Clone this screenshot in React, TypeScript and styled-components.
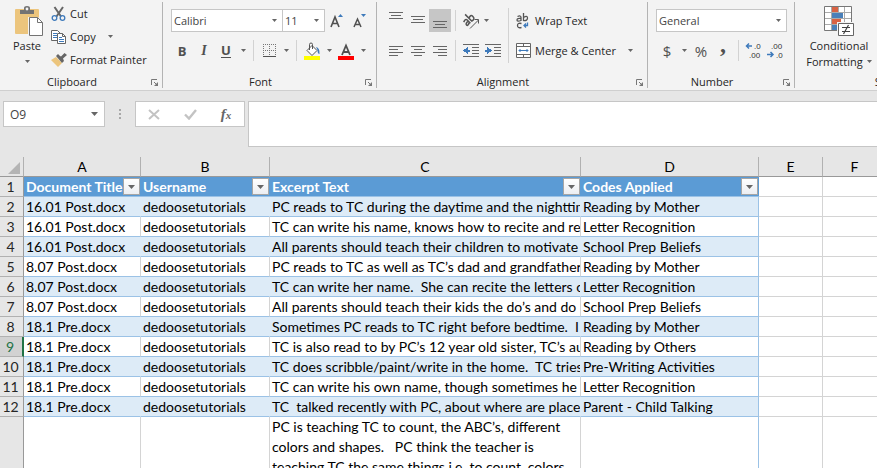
import React from "react";
import styled, { createGlobalStyle, css } from "styled-components";

const UI_FONT = '"Open Sans", "Noto Sans", sans-serif';
const CELL_FONT = 'Lato, "Open Sans", sans-serif';

const color = {
  ribbon: "#f3f3f3",
  chrome: "#e6e6e6",
  ink: "#262626",
  icon: "#666666",
  line: "#c6c6c6",
  grid: "#d4d4d4",
  headerLine: "#b1b1b1",
  blue: "#3e7abb",
  table: "#5b9bd5",
  tableLine: "#9bc2e6",
  band: "#ddebf7",
  green: "#217346",
};

const GlobalStyle = createGlobalStyle`
  *, *::before, *::after { box-sizing: border-box; }
  body { margin: 0; background: #fff; }
  button, input, select { font: inherit; color: inherit; }
`;

const Window = styled.div`
  display: flex;
  flex-direction: column;
  height: 100vh;
  overflow: hidden;
  font-family: ${UI_FONT};
  font-size: 11px;
  color: ${color.ink};
  background: ${color.chrome};
`;

/* ---------- ribbon ---------- */

const Ribbon = styled.header`
  display: flex;
  flex: none;
  overflow: hidden;
  padding: 2px 0;
  background: ${color.ribbon};
  border-bottom: 1px solid #cfcfcf;
`;

const Group = styled.section<{ $width: number }>`
  display: flex;
  flex-direction: column;
  flex: none;
  width: ${(p) => p.$width}px;
  border-right: 1px solid #b3b3b3;
`;

const GroupBody = styled.div`
  display: flex;
  height: 73px;
`;

const GroupFooter = styled.div`
  display: flex;
  align-items: center;
  height: 13px;
  padding-right: 4px;
`;

const GroupLabel = styled.h2`
  flex: 1;
  margin: 0;
  font-size: 11px;
  font-weight: 500;
  line-height: 15px;
  text-align: center;
`;

const Launcher = styled.button`
  display: flex;
  padding: 2px 0 0 7px;
  border: 0;
  background: none;
`;

const ToolColumn = styled.div`
  display: flex;
  flex-direction: column;
`;

const ToolRow = styled.div<{ $gap?: number }>`
  display: flex;
  align-items: center;
  height: 23px;
  gap: ${(p) => p.$gap ?? 0}px;
`;

const ToolStack = styled.div<{ $left: number }>`
  display: flex;
  flex-direction: column;
  gap: 7px;
  padding: 7px 0 0 ${(p) => p.$left}px;
`;

const TextTool = styled.button<{ $gap?: number }>`
  display: flex;
  align-items: center;
  gap: ${(p) => p.$gap ?? 3}px;
  height: 23px;
  padding: 0;
  border: 0;
  background: none;
  white-space: nowrap;
`;

const BigTool = styled.button<{ $width: number; $left?: number }>`
  display: flex;
  flex-direction: column;
  align-items: center;
  justify-content: flex-start;
  width: ${(p) => p.$width}px;
  padding: 4px 0 0 ${(p) => p.$left ?? 0}px;
  border: 0;
  background: none;
`;

const BigLabel = styled.span`
  display: flex;
  align-items: center;
  gap: 4px;
  height: 15px;
  margin-top: 1px;
  line-height: 15px;
  white-space: nowrap;
`;

const IconTool = styled.button<{ $width?: number; $on?: boolean }>`
  display: flex;
  align-items: center;
  justify-content: center;
  flex: none;
  width: ${(p) => p.$width ?? 22}px;
  height: 23px;
  padding: 0;
  border: 0;
  background: ${(p) => (p.$on ? "#c6c6c6" : "none")};
  color: #505050;
`;

const Glyph = styled.span<{ $kind: "bold" | "italic" | "underline" | "symbol" | "comma" }>`
  font-size: 13px;
  line-height: 16px;
  font-weight: 700;
  ${(p) => p.$kind === "italic" && css`font-family: "Liberation Serif", serif; font-style: italic; font-size: 14px;`}
  ${(p) => p.$kind === "underline" && css`border-bottom: 1px solid #505050; line-height: 13px;`}
  ${(p) => p.$kind === "symbol" && css`font-size: 15px; font-weight: 500;`}
  ${(p) => p.$kind === "comma" && css`font-family: "Liberation Serif", serif; font-size: 24px; line-height: 4px; padding-bottom: 14px;`}
`;

const Divider = styled.span<{ $margin: string; $height?: number }>`
  flex: none;
  width: 1px;
  height: ${(p) => p.$height ?? 21}px;
  margin: ${(p) => p.$margin};
  background: #d2d2d2;
`;

const SelectFrame = styled.label<{ $width: number; $joined?: boolean }>`
  display: grid;
  grid-template-columns: 1fr 16px;
  align-items: center;
  flex: none;
  width: ${(p) => p.$width}px;
  height: 23px;
  border: 1px solid ${color.line};
  ${(p) => p.$joined && "border-left: 0;"}
  background: #fff;
  svg { grid-area: 1 / 2; pointer-events: none; justify-self: center; }
`;

const SelectBox = styled.select`
  grid-area: 1 / 1 / 2 / 3;
  width: 100%;
  height: 21px;
  padding: 0 2px;
  border: 0;
  appearance: none;
  background: transparent;
  color: #444;
`;

const Caret = ({ size = 5 }: { size?: number }) => (
  <svg width={size} height={size === 5 ? 3 : 4} viewBox="0 0 6 3" preserveAspectRatio="none" aria-hidden="true">
    <path d="M0 0h6L3 3z" fill="#666" />
  </svg>
);

function Dropdown({ label, value, width, joined }: { label: string; value: string; width: number; joined?: boolean }) {
  return (
    <SelectFrame $width={width} $joined={joined}>
      <SelectBox aria-label={label} defaultValue={value}>
        <option>{value}</option>
      </SelectBox>
      <Caret />
    </SelectFrame>
  );
}

/* ---------- icons ---------- */

const PasteIcon = () => (
  <svg width="32" height="31" viewBox="-4 0 32 31" aria-hidden="true">
    <path d="M1 3h22q1 0 1 1v24H1q-1 0-1-1V4q0-1 1-1z" fill="#ecc57d" />
    <path d="M5 4h4V2q0-2 3-2t3 2v2h4v4H5z" fill="#737373" />
    <circle cx="12" cy="3" r="1.4" fill="#f3f3f3" />
    <path d="M13 11h10l5 5v15H13z" fill={color.ribbon} />
    <path d="M14.5 11.500h8l5 5v13h-13z" fill="#fff" stroke="#737373" />
    <path d="M22.500 11.500v5h5" fill="none" stroke="#737373" />
  </svg>
);

const CutIcon = () => (
  <svg width="16" height="16" viewBox="0 0 16 16" fill="none" aria-hidden="true">
    <path d="M3.500 1L10 10.500M12 1L5.500 10.500" stroke="#666" strokeWidth="2" />
    <circle cx="3.500" cy="12" r="2.300" stroke={color.blue} strokeWidth="1.300" />
    <circle cx="11.500" cy="12" r="2.300" stroke={color.blue} strokeWidth="1.300" />
  </svg>
);

const CopyIcon = () => (
  <svg width="16" height="16" viewBox="0 0 16 16" fill="#fff" aria-hidden="true">
    <path d="M.5 1.500h6l3 3v7h-9z" stroke="#666" />
    <path d="M2 4.500h4M2 6.500h4M2 8.500h4" stroke={color.blue} />
    <path d="M6.500 4.500h5l3 3v7h-8z" stroke="#666" />
    <path d="M11.500 4.500v3h3" stroke="#666" fill="none" />
    <path d="M8 8.500h3M8 10.500h5M8 12.500h5" stroke={color.blue} />
  </svg>
);

const BrushIcon = () => (
  <svg width="16" height="16" viewBox="0 0 16 16" aria-hidden="true">
    <path d="M0 8l5-3 6 6-4 4z" fill="#ecc57d" />
    <path d="M5 4l2-2 2 2 1 .5L13.500 1 16 3 12 6.500 13 9l-2 2z" fill="#666" />
  </svg>
);

const LauncherIcon = () => (
  <svg width="7" height="7" viewBox="0 0 7 7" fill="none" aria-hidden="true">
    <path d="M.5 6V.5H6" stroke="#777" />
    <path d="M3 3l3 3" stroke="#777" />
    <path d="M7 3v4H3z" fill="#777" />
  </svg>
);

const ResizeFontIcon = ({ grow }: { grow?: boolean }) => (
  <svg width="14" height="16" viewBox="0 0 14 16" fill="none" aria-hidden="true">
    {grow ? (
      <>
        <path d="M1 14L5 4l4 10M2.500 10.500h5" stroke="#505050" strokeWidth="1.600" />
        <path d="M8 4h5l-2.500-3z" fill={color.blue} />
      </>
    ) : (
      <>
        <path d="M1 14l3.500-8L8 14M2.500 11.500h4" stroke="#505050" strokeWidth="1.500" />
        <path d="M8 1h5l-2.500 3z" fill={color.blue} />
      </>
    )}
  </svg>
);

const BordersIcon = () => (
  <svg width="13" height="13" viewBox="0 0 13 13" fill="none" stroke="#777" shapeRendering="crispEdges" aria-hidden="true">
    <path d="M0 .5h13M0 6.500h13M.5 0v12M6.500 0v12M12.500 0v12" strokeDasharray="1 1" />
    <path d="M0 12.500h13" stroke="#505050" />
  </svg>
);

const FillIcon = () => (
  <svg width="16" height="18" viewBox="0 0 16 18" fill="none" aria-hidden="true">
    <path d="M8 3.500l5 5-5 5-5-5z" fill="#fff" stroke="#555" />
    <path d="M5.500 8V2.500q0-1.500 1.500-1.500t1.500 1.500V7" stroke="#555" />
    <path d="M12 5q4 1 3.500 7-2 0-2-4z" fill={color.blue} />
    <path d="M0 14h16v4H0z" fill="#ff0" />
  </svg>
);

const FontColorIcon = () => (
  <svg width="16" height="18" viewBox="0 0 16 18" fill="none" aria-hidden="true">
    <path d="M4 13L8 3.500 12 13M5.500 10h5" stroke="#505050" strokeWidth="1.800" />
    <path d="M0 14h16v4H0z" fill="#f00" />
  </svg>
);

const VerticalAlignIcon = ({ top }: { top: number }) => (
  <svg width="14" height="23" viewBox="0 0 14 23" stroke="#666" shapeRendering="crispEdges" aria-hidden="true">
    <path d={`M0 ${top + 0.5}h14M2 ${top + 3.5}h10M0 ${top + 6.5}h14`} />
  </svg>
);

const linePaths = {
  left: "M0 .5h14M0 3.500h9M0 6.500h14M0 9.500h9",
  center: "M0 .5h14M3 3.500h8M0 6.500h14M3 9.500h8",
  right: "M0 .5h14M5 3.500h9M0 6.500h14M5 9.500h9",
};

const TextAlignIcon = ({ side }: { side: keyof typeof linePaths }) => (
  <svg width="14" height="10" viewBox="0 0 14 10" stroke="#666" shapeRendering="crispEdges" aria-hidden="true">
    <path d={linePaths[side]} />
  </svg>
);

const OrientationIcon = () => (
  <svg width="17" height="16" viewBox="0 0 17 16" fill="none" stroke="#555" aria-hidden="true">
    <g transform="rotate(-45 6 6)" strokeWidth="1.500">
      <path d="M0 4.500q4-1.500 4 1V10M4 7Q0 6.500 0 8.500t4 0M6.500 0v10M6.500 5.500q4-2 4 1.500t-4 2.500" />
    </g>
    <path d="M7 15.500l8.500-8.500M11.500 6.500h4v4" />
  </svg>
);

const IndentIcon = ({ outward }: { outward?: boolean }) => (
  <svg width="16" height="13" viewBox="0 0 16 13" fill="none" stroke="#666" shapeRendering="crispEdges" aria-hidden="true">
    <path d="M0 .5h16M9 3.500h7M9 6.500h7M9 9.500h7M0 12.500h16" />
    <path d={outward ? "M7 6.500H2" : "M0 6.500h5"} stroke={color.blue} strokeWidth="2" />
    <path d={outward ? "M5 3v7L0 6.500z" : "M2 3v7l5-3.500z"} fill={color.blue} stroke="none" />
  </svg>
);

const WrapIcon = () => (
  <svg width="15" height="16" viewBox="0 0 15 16" fill="none" stroke="#555" strokeWidth="1.300" aria-hidden="true">
    <path d="M1.500 3.500q3.500-1.500 3.500 1V8M5 5.500q-4-.5-4 1.500t4 .5M7.500 0v8M7.500 4.500Q11.500 2 11.500 5t-4 2.500M5.500 10.500q-4-1-4 2t4 2" />
    <path d="M11.500 9.500v3h-3M10 10.500l-2 2 2 2" stroke={color.blue} />
  </svg>
);

const MergeIcon = () => (
  <svg width="15" height="15" viewBox="0 0 15 15" fill="#fff" stroke="#666" aria-hidden="true">
    <path d="M.5.500h14v14H.500zM.500 3.500h14M.500 11.500h14M7.500 0v3M7.500 12v3" />
    <path d="M3 7.500h9M4.500 6L3 7.500 4.500 9M10.500 6L12 7.500 10.500 9" fill="none" stroke={color.blue} />
  </svg>
);

const DecimalText = styled.text`
  font-family: "Liberation Sans", sans-serif;
  font-size: 8px;
  fill: #333;
`;

const DecimalIcon = ({ more }: { more?: boolean }) => (
  <svg width="18" height="19" viewBox="0 0 18 19" fill="none" stroke={color.blue} strokeWidth="1.500" aria-hidden="true">
    <path d={more ? "M7 5H1.500M4 2.500L1.500 5 4 7.500" : "M0 13.500h6M3.500 11L6 13.500 3.500 16"} />
    <DecimalText x={more ? 9 : 4} y="8" stroke="none">{more ? ".0" : ".00"}</DecimalText>
    <DecimalText x={more ? 4 : 9} y="17" stroke="none">{more ? ".00" : ".0"}</DecimalText>
  </svg>
);

const ConditionalIcon = () => (
  <svg width="30" height="31" viewBox="0 0 30 31" aria-hidden="true">
    <path d="M.5.500h27v24H.500z" fill="#fff" stroke="#777" />
    <path d="M7.500 1v23M20.500 1v23M1 6.500h26M1 12.500h26M1 18.500h26M14.500 1v5" fill="none" stroke="#aaa" />
    <path d="M8 1h6v5H8zM8 13h9v5H8z" fill="#d86344" />
    <path d="M8 7h11v5H8zM8 19h5v5H8z" fill="#4a80b9" />
    <path d="M13 16h17v15H13z" fill={color.ribbon} />
    <path d="M14.500 17.500h15v12h-15z" fill="#fff" stroke="#666" />
    <path d="M18 21.500h8M18 25.500h8M24.500 19l-5 9" fill="none" stroke="#444" strokeWidth="1.200" />
  </svg>
);

const CancelIcon = () => (
  <svg width="12" height="11" viewBox="0 0 12 11" aria-hidden="true">
    <path d="M1 1l10 9M11 1L1 10" stroke="#c3c3c3" strokeWidth="2" />
  </svg>
);

const EnterIcon = () => (
  <svg width="13" height="11" viewBox="0 0 13 11" fill="none" aria-hidden="true">
    <path d="M1 5.500l4 4L12 1" stroke="#c3c3c3" strokeWidth="2.400" />
  </svg>
);

/* ---------- formula bar ---------- */

const FormulaBar = styled.div`
  display: flex;
  align-items: flex-start;
  flex: none;
  padding: 10px 0 10px 3px;
`;

const NameBox = styled.label`
  display: flex;
  align-items: center;
  width: 102px;
  height: 26px;
  padding: 0 6px;
  border: 1px solid ${color.line};
  background: #fff;
`;

const NameInput = styled.input`
  flex: 1;
  min-width: 0;
  padding: 0;
  border: 0;
  background: none;
  font-size: 12px;
  color: #444;
`;

const Grip = styled.span`
  display: grid;
  gap: 2px;
  width: 2px;
  margin: 8px 14px 0;
  i { height: 2px; background: #a8a8a8; }
`;

const FormulaActions = styled.div`
  display: flex;
  align-items: center;
  justify-content: space-around;
  width: 110px;
  height: 26px;
  margin-right: 3px;
  border: 1px solid ${color.line};
  background: #fff;
`;

const FunctionMark = styled.span`
  font: italic 700 15px/20px "Liberation Serif", serif;
  color: #666;
  small { font-size: 11px; }
`;

const FormulaInput = styled.input`
  flex: 1;
  min-width: 0;
  height: 46px;
  border: 1px solid ${color.line};
  border-right: 0;
  background: #fff;
`;

/* ---------- sheet ---------- */

const SheetArea = styled.main`
  flex: 1;
  min-height: 0;
  overflow: hidden;
  background: linear-gradient(${color.chrome} 20px, #fff 20px);
`;

const Sheet = styled.table`
  width: 100%;
  table-layout: fixed;
  border-collapse: separate;
  border-spacing: 0;
  font-family: ${CELL_FONT};
  font-size: 14px;
  line-height: 20px;
  color: #000;
`;

const Column = styled.col<{ $width?: number }>`
  width: ${(p) => (p.$width ? `${p.$width}px` : "auto")};
`;

const ColumnHead = styled.th`
  height: 20px;
  padding: 0;
  border-right: 1px solid ${color.headerLine};
  border-bottom: 1px solid #999;
  background: ${color.chrome};
  font-weight: 400;
  line-height: 19px;
  &:last-child { border-right: 0; }
`;

const Corner = styled(ColumnHead)`
  svg { display: block; margin: 3px 0 0 8px; }
`;

const RowHead = styled.th<{ $active?: boolean }>`
  height: 20px;
  padding: 0 2px 0 0;
  border-right: ${(p) => (p.$active ? `2px solid ${color.green}` : "1px solid #999")};
  border-bottom: 1px solid ${color.headerLine};
  background: ${(p) => (p.$active ? "#d2d2d2" : color.chrome)};
  color: ${(p) => (p.$active ? color.green : "#262626")};
  font-weight: 400;
  line-height: 19px;
`;

const TitleCell = styled.td`
  height: 20px;
  padding: 0;
  border-bottom: 1px solid ${color.tableLine};
  background: ${color.table};
`;

const TitleContent = styled.div`
  display: flex;
  align-items: center;
  justify-content: space-between;
  height: 19px;
  padding: 0 1px 0 2px;
  color: #fff;
  font-weight: 700;
  white-space: nowrap;
`;

const FilterButton = styled.button`
  display: flex;
  align-items: center;
  justify-content: center;
  flex: none;
  width: 17px;
  height: 17px;
  padding: 0;
  border: 1px solid #a6a6a6;
  background: linear-gradient(#fff, #eceef2);
`;

const Cell = styled.td<{ $banded?: boolean; $edge?: boolean }>`
  height: 20px;
  padding: 0 0 0 2px;
  overflow: hidden;
  white-space: pre;
  line-height: 19px;
  border-right: 1px solid ${(p) => (p.$edge ? color.tableLine : p.$banded ? color.band : color.grid)};
  border-bottom: 1px solid ${color.tableLine};
  background: ${(p) => (p.$banded ? color.band : "#fff")};
`;

const TallCell = styled(Cell)`
  height: 61px;
  line-height: 20px;
  vertical-align: top;
`;

const BlankCell = styled.td`
  padding: 0;
  border-right: 1px solid ${color.grid};
  border-bottom: 1px solid ${color.grid};
  &:last-child { border-right: 0; }
`;

const titles = ["Document Title", "Username", "Excerpt Text", "Codes Applied"];

const records = [
  ["16.01 Post.docx", "PC reads to TC during the daytime and the nighttim", "Reading by Mother"],
  ["16.01 Post.docx", "TC can write his name, knows how to recite and re", "Letter Recognition"],
  ["16.01 Post.docx", "All parents should teach their children to motivate", "School Prep Beliefs"],
  ["8.07 Post.docx", "PC reads to TC as well as TC’s dad and grandfather.", "Reading by Mother"],
  ["8.07 Post.docx", "TC can write her name.  She can recite the letters o", "Letter Recognition"],
  ["8.07 Post.docx", "All parents should teach their kids the do’s and do", "School Prep Beliefs"],
  ["18.1 Pre.docx", "Sometimes PC reads to TC right before bedtime.  I", "Reading by Mother"],
  ["18.1 Pre.docx", "TC is also read to by PC’s 12 year old sister, TC’s au", "Reading by Others"],
  ["18.1 Pre.docx", "TC does scribble/paint/write in the home.  TC tries", "Pre-Writing Activities"],
  ["18.1 Pre.docx", "TC can write his own name, though sometimes he", "Letter Recognition"],
  ["18.1 Pre.docx", "TC  talked recently with PC, about where are place", "Parent - Child Talking"],
];

const longExcerpt =
  "PC is teaching TC to count, the ABC’s, different\ncolors and shapes.   PC think the teacher is\nteaching TC the same things i.e. to count, colors,";

function Footer({ children }: { children: string }) {
  return (
    <GroupFooter>
      <GroupLabel>{children}</GroupLabel>
      <Launcher aria-label={`${children} settings`}><LauncherIcon /></Launcher>
    </GroupFooter>
  );
}

function RibbonBar() {
  return (
    <Ribbon>
      <Group $width={163}>
        <GroupBody>
          <BigTool $width={51} $left={3}>
            <PasteIcon />
            <BigLabel>Paste</BigLabel>
            <BigLabel><Caret /></BigLabel>
          </BigTool>
          <ToolColumn>
            <TextTool><CutIcon />Cut</TextTool>
            <ToolRow $gap={12}>
              <TextTool><CopyIcon />Copy</TextTool>
              <Caret />
            </ToolRow>
            <TextTool><BrushIcon />Format Painter</TextTool>
          </ToolColumn>
        </GroupBody>
        <Footer>Clipboard</Footer>
      </Group>

      <Group $width={214}>
        <GroupBody>
          <ToolStack $left={8}>
            <ToolRow>
              <Dropdown label="Font name" value="Calibri" width={112} />
              <Dropdown label="Font size" value="11" width={42} joined />
              <IconTool $width={24} aria-label="Increase font size"><ResizeFontIcon grow /></IconTool>
              <IconTool aria-label="Decrease font size"><ResizeFontIcon /></IconTool>
            </ToolRow>
            <ToolRow>
              <IconTool aria-label="Bold"><Glyph $kind="bold">B</Glyph></IconTool>
              <IconTool aria-label="Italic"><Glyph $kind="italic">I</Glyph></IconTool>
              <IconTool aria-label="Underline"><Glyph $kind="underline">U</Glyph></IconTool>
              <IconTool $width={12} aria-label="Underline style"><Caret /></IconTool>
              <Divider $margin="0 4px" />
              <IconTool aria-label="Borders"><BordersIcon /></IconTool>
              <IconTool $width={12} aria-label="Border style"><Caret /></IconTool>
              <Divider $margin="0 4px" />
              <IconTool aria-label="Fill color"><FillIcon /></IconTool>
              <IconTool $width={12} aria-label="Fill palette"><Caret /></IconTool>
              <IconTool aria-label="Font color"><FontColorIcon /></IconTool>
              <IconTool $width={12} aria-label="Font palette"><Caret /></IconTool>
            </ToolRow>
          </ToolStack>
        </GroupBody>
        <Footer>Font</Footer>
      </Group>

      <Group $width={271}>
        <GroupBody>
          <ToolStack $left={8}>
            <ToolRow>
              <IconTool aria-label="Top align"><VerticalAlignIcon top={3} /></IconTool>
              <IconTool aria-label="Middle align"><VerticalAlignIcon top={7} /></IconTool>
              <IconTool $on aria-label="Bottom align"><VerticalAlignIcon top={12} /></IconTool>
              <Divider $margin="0 4px" />
              <IconTool aria-label="Orientation"><OrientationIcon /></IconTool>
              <IconTool $width={8} aria-label="Orientation options"><Caret /></IconTool>
            </ToolRow>
            <ToolRow>
              <IconTool aria-label="Align left"><TextAlignIcon side="left" /></IconTool>
              <IconTool aria-label="Center"><TextAlignIcon side="center" /></IconTool>
              <IconTool aria-label="Align right"><TextAlignIcon side="right" /></IconTool>
              <Divider $margin="0 4px" />
              <IconTool aria-label="Decrease indent"><IndentIcon outward /></IconTool>
              <IconTool aria-label="Increase indent"><IndentIcon /></IconTool>
            </ToolRow>
          </ToolStack>
          <Divider $margin="6px 7px 0 4px" $height={55} />
          <ToolStack $left={0}>
            <TextTool $gap={4}><WrapIcon />Wrap Text</TextTool>
            <ToolRow $gap={12}>
              <TextTool $gap={4}><MergeIcon />Merge &amp; Center</TextTool>
              <Caret />
            </ToolRow>
          </ToolStack>
        </GroupBody>
        <Footer>Alignment</Footer>
      </Group>

      <Group $width={147}>
        <GroupBody>
          <ToolStack $left={8}>
            <ToolRow>
              <Dropdown label="Number format" value="General" width={131} />
            </ToolRow>
            <ToolRow>
              <IconTool aria-label="Currency"><Glyph $kind="symbol">$</Glyph></IconTool>
              <IconTool $width={12} aria-label="Currency options"><Caret /></IconTool>
              <IconTool aria-label="Percent"><Glyph $kind="symbol">%</Glyph></IconTool>
              <IconTool aria-label="Thousands separator"><Glyph $kind="comma">,</Glyph></IconTool>
              <Divider $margin="0 4px" />
              <IconTool aria-label="Increase decimal"><DecimalIcon more /></IconTool>
              <IconTool aria-label="Decrease decimal"><DecimalIcon /></IconTool>
            </ToolRow>
          </ToolStack>
        </GroupBody>
        <Footer>Number</Footer>
      </Group>

      <Group $width={208}>
        <GroupBody>
          <BigTool $width={88}>
            <ConditionalIcon />
            <BigLabel>Conditional</BigLabel>
            <BigLabel>Formatting<Caret /></BigLabel>
          </BigTool>
        </GroupBody>
        <Footer>Styles</Footer>
      </Group>
    </Ribbon>
  );
}

export default function App() {
  return (
    <>
      <GlobalStyle />
      <Window>
        <RibbonBar />

        <FormulaBar>
          <NameBox>
            <NameInput aria-label="Name box" defaultValue="O9" />
            <Caret size={7} />
          </NameBox>
          <Grip><i /><i /><i /></Grip>
          <FormulaActions>
            <IconTool $width={36} aria-label="Cancel"><CancelIcon /></IconTool>
            <IconTool $width={36} aria-label="Enter"><EnterIcon /></IconTool>
            <IconTool $width={36} aria-label="Insert function">
              <FunctionMark>f<small>x</small></FunctionMark>
            </IconTool>
          </FormulaActions>
          <FormulaInput aria-label="Formula" />
        </FormulaBar>

        <SheetArea>
          <Sheet>
            <colgroup>
              {[24, 117, 129, 311, 178, 64, 64].map((width, i) => (
                <Column key={i} $width={width} />
              ))}
              <Column />
            </colgroup>
            <thead>
              <tr>
                <Corner aria-label="Select all">
                  <svg width="12" height="12" viewBox="0 0 12 12" aria-hidden="true">
                    <path d="M12 0v12H0z" fill="#b4b4b4" />
                  </svg>
                </Corner>
                {["A", "B", "C", "D", "E", "F"].map((name) => (
                  <ColumnHead key={name}>{name}</ColumnHead>
                ))}
                <ColumnHead />
              </tr>
            </thead>
            <tbody>
              <tr>
                <RowHead>1</RowHead>
                {titles.map((title) => (
                  <TitleCell key={title}>
                    <TitleContent>
                      {title}
                      <FilterButton aria-label={`Filter ${title}`}><Caret size={7} /></FilterButton>
                    </TitleContent>
                  </TitleCell>
                ))}
                <BlankCell /><BlankCell /><BlankCell />
              </tr>
              {records.map(([doc, excerpt, code], i) => {
                const banded = i % 2 === 0;
                return (
                  <tr key={i}>
                    <RowHead $active={i === 7}>{i + 2}</RowHead>
                    <Cell $banded={banded}>{doc}</Cell>
                    <Cell $banded={banded}>dedoosetutorials</Cell>
                    <Cell $banded={banded}>{excerpt}</Cell>
                    <Cell $banded={banded} $edge>{code}</Cell>
                    <BlankCell /><BlankCell /><BlankCell />
                  </tr>
                );
              })}
              <tr>
                <RowHead />
                <TallCell />
                <TallCell />
                <TallCell>{longExcerpt}</TallCell>
                <TallCell $edge />
                <BlankCell /><BlankCell /><BlankCell />
              </tr>
            </tbody>
          </Sheet>
        </SheetArea>
      </Window>
    </>
  );
}
